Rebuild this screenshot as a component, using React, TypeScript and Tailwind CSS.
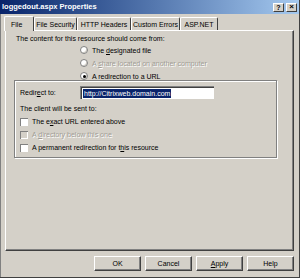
const face = "#d4d0c8";

function Radio({ checked, disabled, label }: { checked?: boolean; disabled?: boolean; label: React.ReactNode }) {
  return (
    <div className="flex items-center gap-[4px] h-[12px]">
      <span className="w-[8px] h-[8px] rounded-full border border-[#808080] bg-white flex items-center justify-center shadow-[inset_-1px_-1px_0_#d4d0c8]">
        {checked && <span className="w-[3px] h-[3px] rounded-full bg-black" />}
      </span>
      <span className={disabled ? "text-[#a09c94] [text-shadow:1px_1px_0_#fff]" : "text-black"}>{label}</span>
    </div>
  );
}

function Check({ disabled, label }: { disabled?: boolean; label: React.ReactNode }) {
  return (
    <div className="flex items-center gap-[4px] h-[13px]">
      <span className={"w-[8px] h-[8px] border-t border-l border-[#808080] shadow-[inset_-1px_-1px_0_#fff] " + (disabled ? "bg-[#d4d0c8]" : "bg-white")} />
      <span className={disabled ? "text-[#a09c94] [text-shadow:1px_1px_0_#fff]" : "text-black"}>{label}</span>
    </div>
  );
}

function Btn({ label }: { label: React.ReactNode }) {
  return (
    <div className="w-[47px] h-[15px] border-t border-l border-white border-r border-b border-r-[#404040] border-b-[#404040] shadow-[inset_-1px_-1px_0_#808080] flex items-center justify-center">
      {label}
    </div>
  );
}

export default function App() {
  const tabs = [
    { t: "File Security", w: "w-[43px]" },
    { t: "HTTP Headers", w: "w-[54px]" },
    { t: "Custom Errors", w: "w-[49px]" },
    { t: "ASP.NET", w: "w-[38px]" },
  ];
  return (
    <div
      className="w-[300px] h-[278px] bg-[#d4d0c8] border-r border-b border-[#404040] flex flex-col text-[7px] leading-none overflow-hidden"
      style={{ fontFamily: '"Liberation Sans", Arial, sans-serif', backgroundColor: face }}
    >
      <div className="h-[14px] bg-gradient-to-r from-[#0a246a] to-[#a6caf0] flex items-center pl-[2px] pr-[2px]">
        <span className="text-white font-bold text-[7.5px] flex-1">loggedout.aspx Properties</span>
        <div className="flex gap-[2px]">
          <div className="w-[11px] h-[9px] bg-[#d4d0c8] border-t border-l border-white border-r border-b border-r-[#404040] border-b-[#404040] flex items-center justify-center font-bold text-[7px]">?</div>
          <div className="w-[11px] h-[9px] bg-[#d4d0c8] border-t border-l border-white border-r border-b border-r-[#404040] border-b-[#404040] flex items-center justify-center font-bold text-[8px]">×</div>
        </div>
      </div>

      <div className="pl-[4px] pr-[5px] pt-[2px] flex flex-col border-l border-l-[#808080] flex-1">
        <div className="flex items-end h-[14px] relative z-10">
          <div className="h-[15px] w-[30px] -mb-[1px] bg-[#d4d0c8] border-t border-l border-white border-r border-r-[#404040] rounded-t-[2px] flex items-center pl-[6px] -ml-[1px]">
            File
          </div>
          {tabs.map((x) => (
            <div key={x.t} className={"h-[13px] bg-[#d4d0c8] border-t border-l border-white border-r border-r-[#404040] rounded-t-[2px] flex items-center justify-center " + x.w}>
              {x.t}
            </div>
          ))}
        </div>

        <div className="h-[221px] border-t border-l border-white border-r border-b border-r-[#404040] border-b-[#404040] shadow-[inset_-1px_-1px_0_#808080] flex flex-col pt-[4px]">
          <div className="pl-[10px]">The content for this resource should come from:</div>
          <div className="pl-[74px] pt-[2px] flex flex-col gap-[1px]">
            <Radio label={<>The <u>d</u>esignated file</>} />
            <Radio disabled label={<>A <u>s</u>hare located on another computer</>} />
            <Radio checked label={<>A redirection to a <u>U</u>RL</>} />
          </div>

          <div className="ml-[8px] mr-[16px] -mt-[2px] h-[78px] border border-[#808080] shadow-[inset_1px_1px_0_#fff,1px_1px_0_#fff] flex flex-col px-[5px] pt-[5px]">
            <div className="flex items-center h-[13px]">
              <span className="w-[60px]">Redir<u>e</u>ct to:</span>
              <div className="w-[134px] h-[13px] bg-white border-t border-l border-[#808080] shadow-[inset_1px_1px_0_#404040] flex items-center pl-[2px]">
                <span className="bg-[#0a246a] text-white px-[1px] leading-[9px]">http://Citrixweb.domain.com</span>
              </div>
            </div>
            <div className="pt-[6px] pb-[3px]">The client will be sent to:</div>
            <Check label={<>The e<u>x</u>act URL entered above</>} />
            <Check disabled label={<>A <u>d</u>irectory below this one</>} />
            <Check label={<>A permanent redirection for t<u>h</u>is resource</>} />
          </div>
        </div>

        <div className="flex justify-end gap-[4px] pt-[5px]">
          <Btn label="OK" />
          <Btn label="Cancel" />
          <Btn label={<><u>A</u>pply</>} />
          <Btn label="Help" />
        </div>
      </div>
    </div>
  );
}
